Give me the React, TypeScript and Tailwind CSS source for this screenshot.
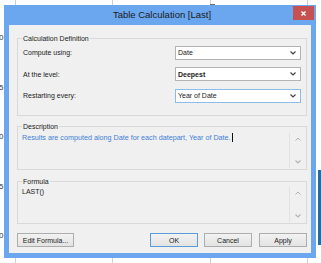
import React from "react";

const font = { fontFamily: '"Liberation Sans", Arial, sans-serif' };

function Chevron({ color = "#444" }: { color?: string }) {
  return (
    <svg width="6" height="4" viewBox="0 0 6 4" className="block">
      <path d="M0.5 0.5 L3 3 L5.5 0.5" fill="none" stroke={color} strokeWidth="1.2" />
    </svg>
  );
}

function Up() {
  return (
    <svg width="6" height="4" viewBox="0 0 6 4" className="block">
      <path d="M0.5 3.5 L3 1 L5.5 3.5" fill="none" stroke="#b4b4b4" strokeWidth="1" />
    </svg>
  );
}

function Select({ value, bold, focus }: { value: string; bold?: boolean; focus?: boolean }) {
  return (
    <div
      className={`w-[126px] h-[14px] bg-white border flex items-center justify-between pl-[2px] pr-[4px] ${
        focus ? "border-[#8cbcec]" : "border-[#b3b3b3]"
      }`}
    >
      <span className={`text-[7px] leading-[9px] text-[#1a1a1a] ${bold ? "font-bold" : ""}`}>{value}</span>
      <Chevron />
    </div>
  );
}

function Scroll() {
  return (
    <div className="w-[17px] my-[1.5px] border-l border-[#e2e2e2] flex flex-col items-center justify-between py-[4px]">
      <Up />
      <Chevron color="#b4b4b4" />
    </div>
  );
}

function Btn({ label, w, primary }: { label: string; w: string; primary?: boolean }) {
  return (
    <div
      className={`${w} h-[14px] flex items-center justify-center text-[7px] leading-[9px] text-[#1a1a1a] border bg-gradient-to-b from-[#f2f2f2] to-[#e3e3e3] ${
        primary ? "border-[#5a9bd8]" : "border-[#adadad]"
      }`}
    >
      {label}
    </div>
  );
}

export default function App() {
  return (
    <div className="relative w-[321px] h-[263px] bg-white overflow-hidden" style={font}>
      {/* background sheet */}
      <div className="flex h-full">
        <div className="w-[16px] border-r border-[#cfcfcf] flex flex-col text-[8px] leading-[10px] text-[#333]">
          {["0", "5", "0", "5", "0"].map((d, i) => (
            <div key={i} className={`w-[4px] h-[10px] overflow-hidden ${i === 0 ? "mt-[33px]" : "mt-[39.5px]"}`}>
              <span className="block ml-[-1px]">{d}</span>
            </div>
          ))}
        </div>
        <div className="w-[97px] border-r border-[#cfcfcf]" />
        <div className="w-[98px] border-r border-[#cfcfcf] flex justify-end">
          <div className="w-[5px] h-[1.5px] mt-[3.5px] mr-[-5px] bg-[#6b6b6b]" />
        </div>
        <div className="w-[97px] border-r border-[#cfcfcf]" />
        <div className="flex-1">
          <div className="ml-[10px] mt-[170px] h-[75px] bg-[#2a6aa3]" />
        </div>
      </div>

      {/* dialog */}
      <div className="absolute left-[4px] top-[5px] w-[312px] h-[253px] bg-[#6aa7ee] flex flex-col px-[5px] pb-[5px]">
        <div className="relative h-[20px] flex items-center justify-center">
          <span className="text-[9.5px] text-[#1a1a1a] pl-[4px]">Table Calculation [Last]</span>
          <div className="absolute right-[-3px] top-[1px] w-[21px] h-[14px] bg-[#c75050] flex items-center justify-center">
            <svg width="5" height="5" viewBox="0 0 5 5">
              <path d="M0.5 0.5 L4.5 4.5 M4.5 0.5 L0.5 4.5" stroke="#fff" strokeWidth="1.4" />
            </svg>
          </div>
        </div>
        <div className="flex-1 bg-[#f0f0f0] pl-[8px] pr-[4px] flex flex-col">
          <fieldset className="mt-[8.5px] border border-[#d9d9d9] pt-[3px] pb-[12px]">
            <legend className="ml-[4px] px-[1px] text-[7px] leading-[9px] text-[#1a1a1a]">Calculation Definition</legend>
            <div className="flex flex-col gap-[7.5px]">
              {[
                { l: "Compute using:", v: "Date" },
                { l: "At the level:", v: "Deepest", b: true },
                { l: "Restarting every:", v: "Year of Date", f: true },
              ].map((r) => (
                <div key={r.l} className="flex items-center justify-between pl-[5px] pr-[5px]">
                  <span className="text-[7px] leading-[9px] text-[#1a1a1a]">{r.l}</span>
                  <Select value={r.v} bold={r.b} focus={r.f} />
                </div>
              ))}
            </div>
          </fieldset>

          <fieldset className="mt-[6.5px] border border-[#d9d9d9]">
            <legend className="ml-[4px] px-[1px] text-[7px] leading-[9px] text-[#1a1a1a]">Description</legend>
            <div className="flex h-[38px]">
              <div className="flex-1 pl-[4px] pt-[2px] text-[7.2px] leading-[9px] text-[#3d7fd6] flex items-start">
                <span>Results are computed along Date for each datepart, Year of Date.</span>
                <span className="inline-block w-[1px] h-[9px] bg-[#111] ml-[1px]" />
              </div>
              <Scroll />
            </div>
          </fieldset>

          <fieldset className="mt-[6.5px] border border-[#d9d9d9]">
            <legend className="ml-[4px] px-[1px] text-[7px] leading-[9px] text-[#1a1a1a]">Formula</legend>
            <div className="flex h-[37.5px]">
              <div className="flex-1 pl-[4px] pt-[1.5px] text-[7px] leading-[9px] text-[#1a1a1a]">LAST()</div>
              <Scroll />
            </div>
          </fieldset>

          <div className="mt-[9px] flex">
            <Btn label="Edit Formula..." w="w-[57px]" />
            <div className="flex-1" />
            <Btn label="OK" w="w-[48px]" primary />
            <div className="w-[6px]" />
            <Btn label="Cancel" w="w-[48px]" />
            <div className="w-[7px]" />
            <Btn label="Apply" w="w-[48px]" />
          </div>
        </div>
      </div>
    </div>
  );
}
